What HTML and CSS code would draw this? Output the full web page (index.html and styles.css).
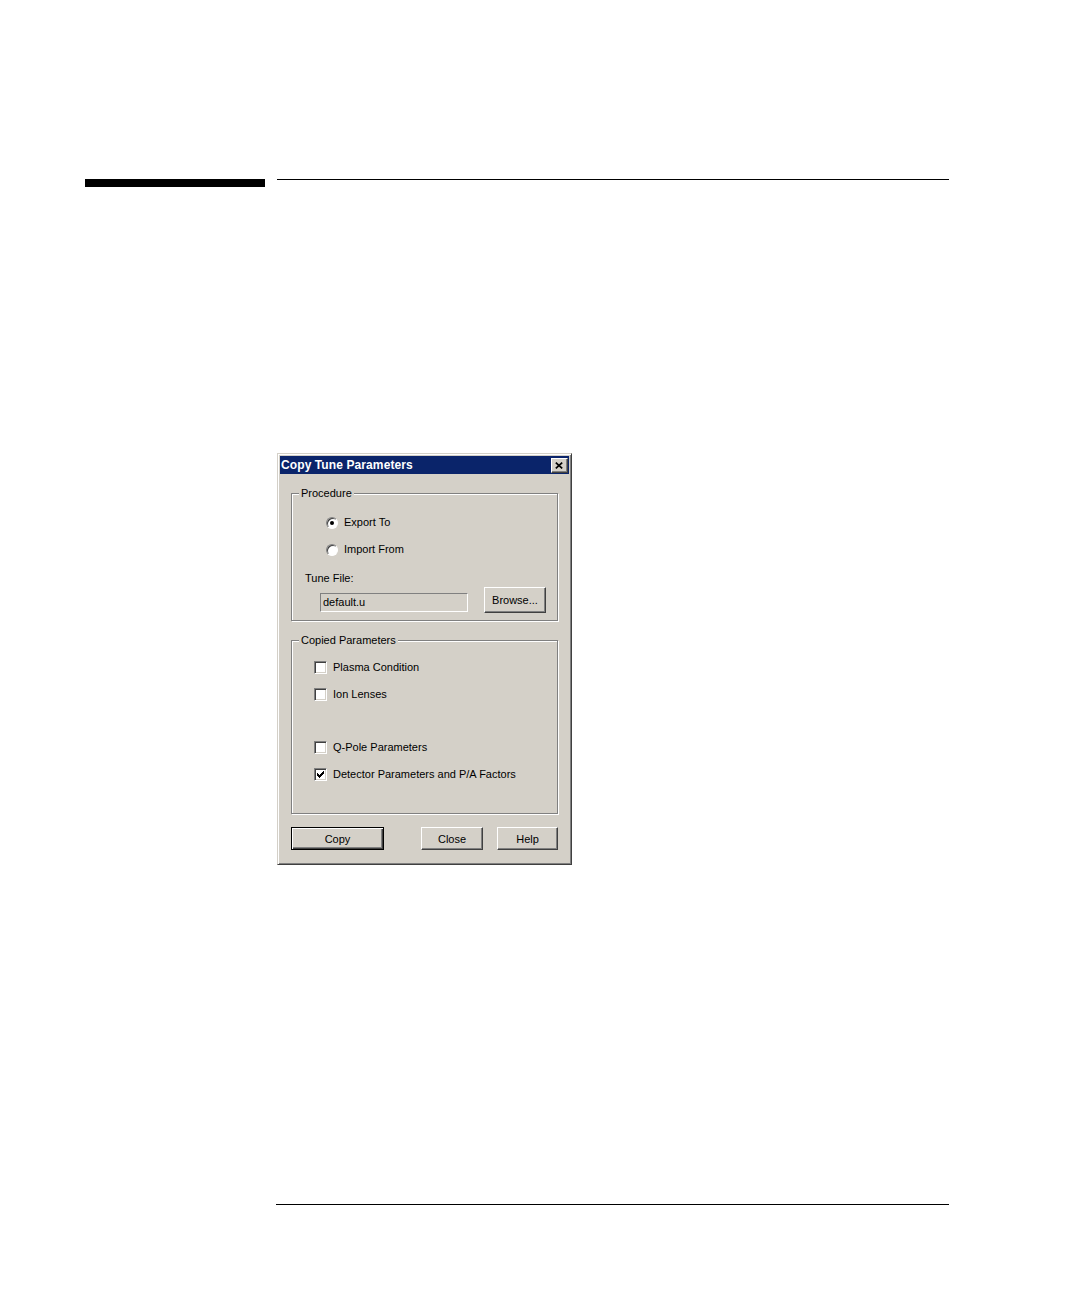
FILE: index.html
```html
<!DOCTYPE html>
<html>
<head>
<meta charset="utf-8">
<title>Copy Tune Parameters</title>
<link rel="stylesheet" href="styles.css">
</head>
<body>
<div class="page">
  <div class="head-rule">
    <div class="bar"></div>
    <div class="line"></div>
  </div>

  <div class="dialog">
    <div class="titlebar">
      <span class="title">Copy Tune Parameters</span>
      <span class="close-btn">
        <svg width="8" height="7" viewBox="0 0 8 7">
          <path d="M0.8 0.6 L7.2 6.4 M7.2 0.6 L0.8 6.4" stroke="#000" stroke-width="1.7" fill="none"/>
        </svg>
      </span>
    </div>

    <div class="dlg-body">
      <div class="group g1">
        <span class="legend">Procedure</span>
        <div class="opt r1"><span class="radio on"><span class="dot"></span></span><span class="lbl">Export To</span></div>
        <div class="opt r2"><span class="radio"></span><span class="lbl">Import From</span></div>
        <div class="tune-label">Tune File:</div>
        <div class="file-row">
          <div class="field">default.u</div>
          <div class="btn browse">Browse...</div>
        </div>
      </div>

      <div class="group g2">
        <span class="legend">Copied Parameters</span>
        <div class="chk c1"><span class="box"></span><span class="lbl">Plasma Condition</span></div>
        <div class="chk c2"><span class="box"></span><span class="lbl">Ion Lenses</span></div>
        <div class="chk c3"><span class="box"></span><span class="lbl">Q-Pole Parameters</span></div>
        <div class="chk c4"><span class="box">
          <svg width="7" height="7" viewBox="0 0 7 7" shape-rendering="crispEdges">
            <rect x="0" y="2" width="1" height="3" fill="#000"/>
            <rect x="1" y="3" width="1" height="3" fill="#000"/>
            <rect x="2" y="4" width="1" height="3" fill="#000"/>
            <rect x="3" y="3" width="1" height="3" fill="#000"/>
            <rect x="4" y="2" width="1" height="3" fill="#000"/>
            <rect x="5" y="1" width="1" height="3" fill="#000"/>
            <rect x="6" y="0" width="1" height="3" fill="#000"/>
          </svg>
        </span><span class="lbl">Detector Parameters and P/A Factors</span></div>
      </div>

      <div class="buttons">
        <div class="btn default copy">Copy</div>
        <div class="btn close">Close</div>
        <div class="btn help">Help</div>
      </div>
    </div>
  </div>

  <div class="foot-rule"></div>
</div>
</body>
</html>
```

FILE: styles.css
```css
html, body {
  margin: 0;
  padding: 0;
  background: #ffffff;
}

.page {
  min-height: 1298px;
  overflow: hidden;
  font-family: "Liberation Sans", Arial, sans-serif;
  font-size: 11px;
  color: #000;
}

/* top rule */
.head-rule {
  display: flex;
  align-items: flex-start;
  padding-top: 179px;
}
.head-rule .bar {
  margin-left: 85px;
  width: 180px;
  height: 8px;
  background: #000;
}
.head-rule .line {
  margin-left: 12px;
  width: 672px;
  height: 1px;
  background: #000;
}

/* dialog window */
.dialog {
  margin: 266px 0 0 277px;
  width: 295px;
  height: 412px;
  box-sizing: border-box;
  background: #d4d0c8;
  border: 1px solid;
  border-color: #d4d0c8 #404040 #404040 #d4d0c8;
  box-shadow: inset 1px 1px 0 #ffffff, inset -1px -1px 0 #808080;
  padding: 2px;
}

.titlebar {
  height: 18px;
  background: #0a246a;
  display: flex;
  align-items: center;
  justify-content: space-between;
  padding: 0 1px 0 1px;
}
.title {
  color: #fff;
  font-weight: bold;
  font-size: 12px;
  line-height: 18px;
  white-space: nowrap;
  letter-spacing: 0.1px;
}
.close-btn {
  width: 17px;
  height: 15px;
  box-sizing: border-box;
  background: #d4d0c8;
  border: 1px solid;
  border-color: #ffffff #404040 #404040 #ffffff;
  box-shadow: inset -1px -1px 0 #808080;
  display: flex;
  align-items: center;
  justify-content: center;
  padding-right: 1px;
}
.close-btn svg { display: block; }

.dlg-body {
  display: flex;
  flex-direction: column;
  padding: 19px 11px 0 11px;
}

/* group boxes */
.group {
  width: 267px;
  box-sizing: border-box;
  border: 1px solid #808080;
  box-shadow: 1px 1px 0 #ffffff, inset 1px 1px 0 #ffffff;
  display: flex;
  flex-direction: column;
  align-items: flex-start;
}
.g1 { padding-bottom: 7px; }
.g2 { margin-top: 19px; padding-bottom: 32px; }

.legend {
  display: block;
  margin: -7px 0 0 7px;
  padding: 0 2px;
  background: #d4d0c8;
  line-height: 13px;
  white-space: nowrap;
}

/* radio options */
.opt {
  display: flex;
  align-items: center;
  height: 13px;
  margin-left: 34px;
}
.r1 { margin-top: 16px; }
.r2 { margin-top: 14px; }
.opt .lbl { margin-left: 6px; line-height: 13px; white-space: nowrap; }

.radio {
  width: 12px;
  height: 12px;
  box-sizing: border-box;
  border-radius: 50%;
  background: #ffffff;
  border: 1px solid;
  border-color: #808080 #ffffff #ffffff #808080;
  box-shadow: inset 1px 1px 0 #404040;
  display: flex;
  align-items: center;
  justify-content: center;
}
.radio .dot {
  width: 4px;
  height: 4px;
  border-radius: 50%;
  background: #000;
}

.tune-label {
  margin: 16px 0 0 13px;
  line-height: 13px;
}

.file-row {
  display: flex;
  align-items: flex-start;
  margin: 2px 0 0 28px;
}
.field {
  margin-top: 6px;
  width: 148px;
  height: 19px;
  box-sizing: border-box;
  background: #d4d0c8;
  border: 1px solid;
  border-color: #808080 #ffffff #ffffff #808080;
  padding-left: 2px;
  line-height: 17px;
}

/* buttons */
.btn {
  box-sizing: border-box;
  background: #d4d0c8;
  border: 1px solid;
  border-color: #ffffff #404040 #404040 #ffffff;
  box-shadow: inset -1px -1px 0 #808080;
  display: flex;
  align-items: center;
  justify-content: center;
  height: 23px;
  white-space: nowrap;
}
.btn.default {
  border-color: #000;
  box-shadow: inset 1px 1px 0 #ffffff, inset -1px -1px 0 #404040, inset -2px -2px 0 #808080;
}
.browse {
  margin-left: 16px;
  width: 62px;
  height: 26px;
}

/* checkboxes */
.chk {
  display: flex;
  align-items: center;
  height: 13px;
  margin-left: 22px;
}
.c1 { margin-top: 14px; }
.c2 { margin-top: 14px; }
.c3 { margin-top: 40px; }
.c4 { margin-top: 14px; }
.chk .lbl { margin-left: 6px; line-height: 13px; white-space: nowrap; }

.box {
  width: 13px;
  height: 13px;
  box-sizing: border-box;
  background: #ffffff;
  border: 1px solid;
  border-color: #808080 #ffffff #ffffff #808080;
  box-shadow: inset 1px 1px 0 #404040, inset -1px -1px 0 #d4d0c8;
  display: flex;
  align-items: center;
  justify-content: center;
}
.box svg { display: block; }

.buttons {
  display: flex;
  margin-top: 13px;
}
.copy { width: 93px; }
.close { width: 62px; margin-left: 37px; }
.help { width: 61px; margin-left: 14px; }

/* bottom rule */
.foot-rule {
  margin: 339px 0 0 276px;
  width: 673px;
  height: 1px;
  background: #000;
}
```
